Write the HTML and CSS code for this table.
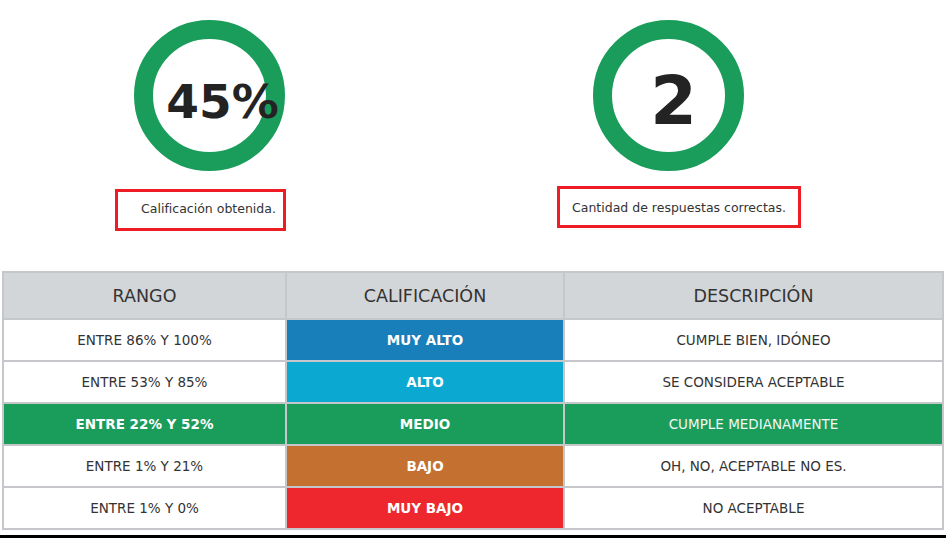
FILE: index.html
```html
<!DOCTYPE html>
<html lang="es">
<head>
<meta charset="utf-8">
<link rel="stylesheet" href="styles.css">
</head>
<body>
<div class="stats">
  <div class="stat stat-score">
    <div class="ring"><span class="ring-value value-score">45%</span></div>
    <div class="label label-score">Calificación obtenida.</div>
  </div>
  <div class="stat stat-count">
    <div class="ring"><span class="ring-value value-count">2</span></div>
    <div class="label label-count">Cantidad de respuestas correctas.</div>
  </div>
</div>

<div class="grid">
  <div class="cell head">RANGO</div>
  <div class="cell head">CALIFICACIÓN</div>
  <div class="cell head">DESCRIPCIÓN</div>

  <div class="cell">ENTRE 86% Y 100%</div>
  <div class="cell tag muy-alto">MUY ALTO</div>
  <div class="cell">CUMPLE BIEN, IDÓNEO</div>

  <div class="cell">ENTRE 53% Y 85%</div>
  <div class="cell tag alto">ALTO</div>
  <div class="cell">SE CONSIDERA ACEPTABLE</div>

  <div class="cell active strong">ENTRE 22% Y 52%</div>
  <div class="cell tag medio">MEDIO</div>
  <div class="cell active">CUMPLE MEDIANAMENTE</div>

  <div class="cell">ENTRE 1% Y 21%</div>
  <div class="cell tag bajo">BAJO</div>
  <div class="cell">OH, NO, ACEPTABLE NO ES.</div>

  <div class="cell">ENTRE 1% Y 0%</div>
  <div class="cell tag muy-bajo">MUY BAJO</div>
  <div class="cell">NO ACEPTABLE</div>
</div>
<div class="bottom-bar"></div>
</body>
</html>
```

FILE: styles.css
```css
* { box-sizing: border-box; }
html, body { margin: 0; padding: 0; background: #fff; }
body {
  width: 946px;
  height: 538px;
  overflow: hidden;
  font-family: "DejaVu Sans", Verdana, sans-serif;
  color: #333;
}

.stats {
  display: flex;
  align-items: flex-start;
  padding-top: 20px;
  padding-left: 115px;
  gap: 271px;
}
.stat { display: flex; flex-direction: column; align-items: flex-start; }
.stat-score { width: 171px; }
.stat-count { width: 244px; }

.ring {
  width: 151px;
  height: 151px;
  border: 19px solid #1a9c5b;
  border-radius: 50%;
  display: flex;
  align-items: center;
  justify-content: center;
}
.stat-score .ring { margin-left: 19px; }
.stat-count .ring { margin-left: 36px; }

.ring-value {
  font-weight: bold;
  color: #232323;
  white-space: nowrap;
  line-height: 1;
}
.value-score { font-size: 47px; margin-left: 26px; margin-top: 12px; }
.value-count { font-size: 67px; margin-left: 10px; margin-top: 12px; }

.label {
  height: 42px;
  border: 3px solid #ee1c25;
  display: flex;
  align-items: center;
  justify-content: center;
  font-size: 12.5px;
  color: #333;
  white-space: nowrap;
}
.label-score { width: 171px; margin-top: 18px; padding-left: 16px; padding-bottom: 3px; }
.label-count { width: 244px; margin-top: 15px; }

.grid {
  display: grid;
  grid-template-columns: 281px 276px 377px;
  grid-template-rows: 45px repeat(5, 40px);
  gap: 2px;
  padding: 2px;
  background: #c5c7cb;
  width: 942px;
  margin: 40px 0 0 2px;
}
.cell {
  background: #fff;
  display: flex;
  align-items: center;
  justify-content: center;
  font-size: 13.5px;
  color: #333;
}
.head {
  background: #d3d6d9;
  font-size: 17.5px;
  color: #333;
}
.tag { color: #fff; font-weight: bold; }
.muy-alto { background: #187fbb; }
.alto { background: #0ba8d2; }
.medio { background: #1a9c5b; }
.bajo { background: #c47031; }
.muy-bajo { background: #ee272e; }
.active { background: #1a9c5b; color: #f1f7f3; }
.strong { font-weight: bold; color: #fff; }

.bottom-bar {
  height: 4px;
  background: #000;
  margin-top: 5px;
}
```
